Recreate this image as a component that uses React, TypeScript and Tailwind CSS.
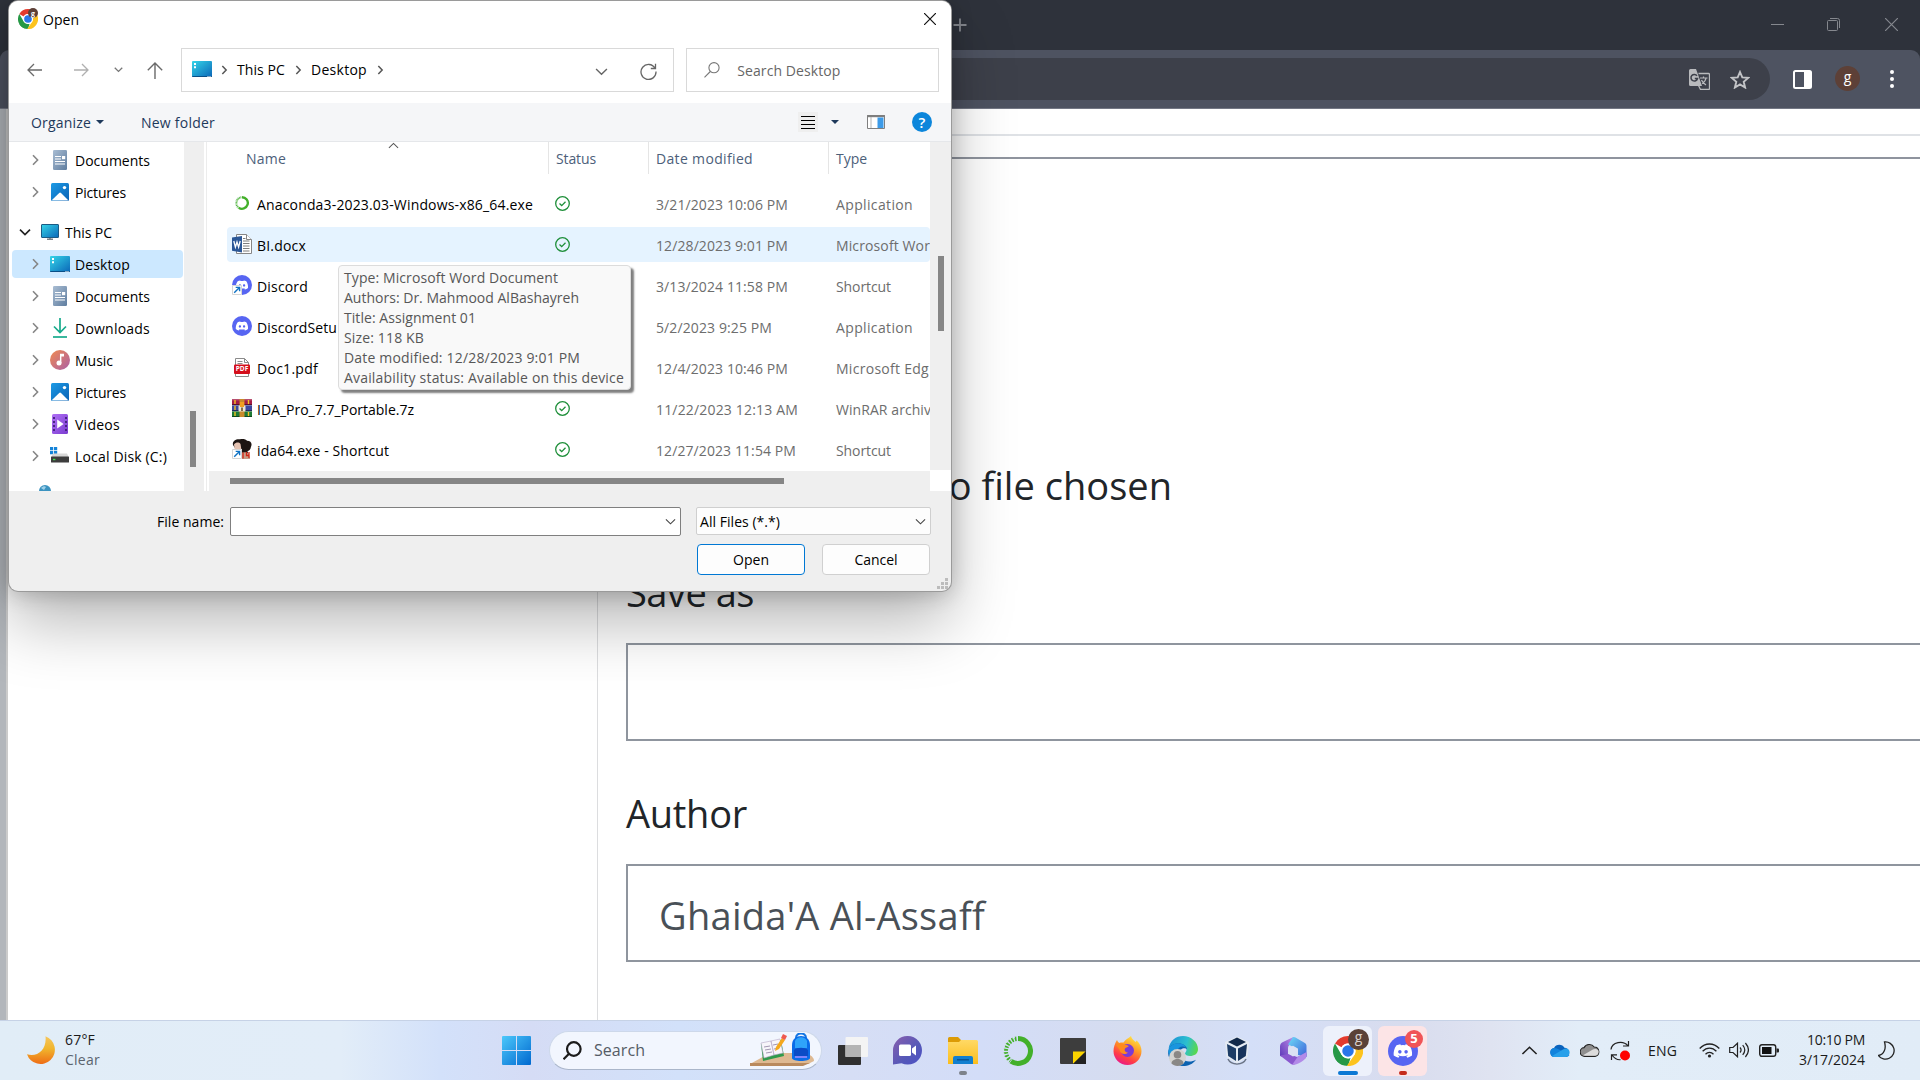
import React, { useLayoutEffect, useRef } from 'react';

/** Single line of text whose tracking is adjusted so that it spans `w` pixels. */
function Fit({ w, className = '', children }: { w: number; className?: string; children: string }) {
  const ref = useRef<HTMLSpanElement>(null);
  useLayoutEffect(() => {
    const el = ref.current;
    if (!el) return;
    el.style.letterSpacing = '0px';
    const natural = el.getBoundingClientRect().width;
    el.style.letterSpacing = `${(w - natural) / children.length}px`;
  }, [w, children]);
  return (
    <span ref={ref} className={`inline-block shrink-0 whitespace-pre ${className}`}>
      {children}
    </span>
  );
}

function Chrome({ size, className = '' }: { size: number; className?: string }) {
  return (
    <svg width={size} height={size} viewBox="0 0 48 48" className={className}>
      <circle cx="24" cy="24" r="24" fill="#fff" />
      <path d="M24 0A24 24 0 0 1 44.8 12H24A12 12 0 0 0 13.6 18L3.2 12A24 24 0 0 1 24 0Z" fill="#e33b2e" />
      <path d="M3.2 12 13.6 30A12 12 0 0 0 24 36L24 36 16 46.7A24 24 0 0 1 3.2 12Z" fill="#269846" />
      <path d="M13.6 30A12 12 0 0 0 28 35.3L24 48A24 24 0 0 1 3.5 36.5Z" fill="#269846" />
      <path d="M44.8 12A24 24 0 0 1 22 48L34.4 30A12 12 0 0 0 24 12Z" fill="#fcc31e" />
      <circle cx="24" cy="24" r="12" fill="#fff" />
      <circle cx="24" cy="24" r="9.2" fill="#2a76e8" />
    </svg>
  );
}

const DISCORD =
  'M20.3 4.4A19.8 19.8 0 0 0 15.4 2.9l-.6 1.3a18.3 18.3 0 0 0-5.5 0L8.6 2.9A19.7 19.7 0 0 0 3.7 4.4C.5 9-.3 13.6.1 18.1a19.9 19.9 0 0 0 6 3l1.3-2.1-2-.9.4-.3c3.9 1.8 8.2 1.8 12.1 0l.4.3-2 .9 1.3 2a19.8 19.8 0 0 0 6-3c.5-5.2-.8-9.7-3.3-13.6ZM8 15.3c-1.2 0-2.2-1.1-2.2-2.4s1-2.4 2.2-2.4 2.2 1.1 2.2 2.4-1 2.4-2.2 2.4Zm8 0c-1.2 0-2.2-1.1-2.2-2.4s1-2.4 2.2-2.4 2.2 1.1 2.2 2.4-1 2.4-2.2 2.4Z';

function Discord({ size }: { size: number }) {
  return (
    <svg width={size} height={size} viewBox="0 0 40 40">
      <circle cx="20" cy="20" r="20" fill="#5765f2" />
      <g transform="translate(7.5 8) scale(1.04 1)">
        <path d={DISCORD} fill="#fff" />
      </g>
    </svg>
  );
}

function Chevron({ dir, size = 12, color = '#808080', w = 1.4 }: { dir: 'r' | 'd' | 'u'; size?: number; color?: string; w?: number }) {
  const d = dir === 'r' ? 'M4 1.2 8.6 6 4 10.8' : dir === 'd' ? 'M1 3.7 6 8.5 11 3.7' : 'M1 8.5 6 3.7 11 8.5';
  return (
    <svg width={size} height={size} viewBox="0 0 12 12" fill="none" stroke={color} strokeWidth={w} className="shrink-0">
      <path d={d} />
    </svg>
  );
}

function DesktopIcon() {
  return (
    <svg width="20" height="16" viewBox="0 0 20 16">
      <defs>
        <linearGradient id="dk" x1="0" y1="0" x2="1" y2="1">
          <stop offset="0" stopColor="#35d5e8" />
          <stop offset="1" stopColor="#0b67b8" />
        </linearGradient>
      </defs>
      <rect width="20" height="16" rx="1" fill="url(#dk)" />
      <path d="M0 15h20v0a1 1 0 0 1-1 1H1a1 1 0 0 1-1-1Z" fill="#0a4f86" />
      <path d="M2 2h2v2H2zM2 5.2h2v2H2zM15.5 15h1v1h-1zM17.5 15h1v1h-1z" fill="#fff" />
    </svg>
  );
}

function DocumentIcon() {
  return (
    <svg width="14" height="20" viewBox="0 0 14 20">
      <defs>
        <linearGradient id="dc" x1="0" y1="0" x2="1" y2="1">
          <stop offset="0" stopColor="#a9bdd3" />
          <stop offset="1" stopColor="#5f7d9f" />
        </linearGradient>
      </defs>
      <rect width="14" height="20" rx="1.3" fill="url(#dc)" />
      <path d="M2 6.5h6M2 9h6M2 11.5h10M2 14h10" stroke="#fff" strokeWidth="1.2" />
      <rect x="9" y="6" width="3.2" height="3.2" fill="#fff" />
    </svg>
  );
}

function PicturesIcon() {
  return (
    <svg width="18" height="18" viewBox="0 0 18 18">
      <defs>
        <linearGradient id="pc" x1="0" y1="0" x2="1" y2="1">
          <stop offset="0" stopColor="#1d9be6" />
          <stop offset="1" stopColor="#0b62b4" />
        </linearGradient>
      </defs>
      <rect width="18" height="18" rx="1.5" fill="url(#pc)" />
      <path d="M1 17 8.2 9.9a1.3 1.3 0 0 1 1.8 0L17 17a1 1 0 0 1-.7.6H1.7A1 1 0 0 1 1 17Z" fill="#fff" />
      <circle cx="13.5" cy="4.6" r="1.7" fill="#fff" />
    </svg>
  );
}

function PcIcon() {
  return (
    <svg width="18" height="16" viewBox="0 0 18 16">
      <path d="M6 15.3h6M9 13v2" stroke="#7b8288" strokeWidth="1.6" />
      <rect x=".5" y=".5" width="17" height="13" rx=".5" fill="url(#dk)" stroke="#1b5b84" />
    </svg>
  );
}

function DownloadsIcon() {
  return (
    <svg width="16" height="20" viewBox="0 0 16 20" fill="none" stroke="#17ab8c" strokeWidth="1.7">
      <path d="M8 0v14M2 8.5l6 6 6-6" />
      <path d="M1 19h14" />
    </svg>
  );
}

function MusicIcon() {
  return (
    <svg width="20" height="20" viewBox="0 0 20 20">
      <defs>
        <linearGradient id="mu" x1="0" y1="0" x2="1" y2="1">
          <stop offset="0" stopColor="#f08a50" />
          <stop offset="1" stopColor="#ab5fa6" />
        </linearGradient>
      </defs>
      <circle cx="10" cy="10" r="10" fill="url(#mu)" />
      <path d="M10 3.8h4v2.6h-2.6v6.8h-1.5Z" fill="#fff" />
      <circle cx="9" cy="13" r="2.5" fill="#fff" />
    </svg>
  );
}

function VideosIcon() {
  return (
    <svg width="16" height="20" viewBox="0 0 16 20">
      <defs>
        <linearGradient id="vi" x1="0" y1="0" x2="1" y2="1">
          <stop offset="0" stopColor="#b070f5" />
          <stop offset="1" stopColor="#7a3bd0" />
        </linearGradient>
      </defs>
      <rect width="16" height="20" rx="1.5" fill="url(#vi)" />
      <path d="M2 3v15M14 3v15" stroke="#40207a" strokeWidth="1.8" strokeDasharray="2 2" />
      <path d="M5.2 5.5 11.6 10l-6.4 4.5Z" fill="#fff" />
    </svg>
  );
}

function DiskIcon() {
  return (
    <svg width="20" height="18" viewBox="0 0 20 18">
      <path d="M0 0h3.2v3.2H0zM4 0h3.2v3.2H4zM0 4h3.2v3.2H0zM4 4h3.2v3.2H4z" fill="#1583d8" />
      <path d="M3 6.5h14l2 4H1Z" fill="#d8d8d8" />
      <rect x="1" y="9.5" width="18" height="6" rx=".6" fill="#3d3d3d" />
      <path d="M3 12.5h2.4" stroke="#3fe04d" strokeWidth="1.4" />
    </svg>
  );
}

type Node = { label: string; w: number; icon: React.ReactNode; selected?: boolean };
const quick: Node[] = [
  { label: 'Documents', w: 75, icon: <DocumentIcon /> },
  { label: 'Pictures', w: 51, icon: <PicturesIcon /> },
];
const pc: Node[] = [
  { label: 'Desktop', w: 55, icon: <DesktopIcon />, selected: true },
  { label: 'Documents', w: 75, icon: <DocumentIcon /> },
  { label: 'Downloads', w: 75, icon: <DownloadsIcon /> },
  { label: 'Music', w: 38, icon: <MusicIcon /> },
  { label: 'Pictures', w: 51, icon: <PicturesIcon /> },
  { label: 'Videos', w: 45, icon: <VideosIcon /> },
  { label: 'Local Disk (C:)', w: 92, icon: <DiskIcon /> },
];

function TreeRow({ n }: { n: Node }) {
  return (
    <div className="flex h-8 items-center pl-[3px]">
      <div className={`flex h-7 w-[171px] items-center rounded-sm pl-[17px] ${n.selected ? 'bg-[#cce8ff]' : ''}`}>
        <Chevron dir="r" color="#868686" w={1.6} />
        <div className="ml-1 flex w-[30px] justify-center">{n.icon}</div>
        <Fit w={n.w}>{n.label}</Fit>
      </div>
    </div>
  );
}

function Ring({ size }: { size: number }) {
  return (
    <svg width={size} height={size} viewBox="0 0 30 30" fill="none" stroke="#43b02a">
      <path d="M15 2.6A12.4 12.4 0 1 1 8 25.2" strokeWidth="5" />
      <path d="M13.5 2.8A12.4 12.4 0 0 0 7.5 24.8" strokeWidth="4.4" strokeDasharray="1.8 1.3" />
      <path d="M12 1.2A14 14 0 0 0 6 26" strokeWidth="1" strokeDasharray="3 1.2" stroke="#dbe3f5" />
    </svg>
  );
}

function WordIcon() {
  return (
    <svg width="20" height="20" viewBox="0 0 20 20">
      <path d="M4.5.5h10l5 5v14h-15Z" fill="#fff" stroke="#868686" />
      <path d="M14.5.5v5h5" fill="#fff" stroke="#868686" />
      <path d="M11 4.5h2.5M11 7h6.5M11 9.5h6.5M11 12h6.5M11 14.5h6.5M11 17h6.5" stroke="#7d7d7d" />
      <path d="M0 3.4 10 2v16.4L0 16.8Z" fill="#2b5797" />
      <path d="m1.8 7 1.6 6.2L5 8l1.6 5.2L8.2 7" fill="none" stroke="#fff" strokeWidth="1.3" />
    </svg>
  );
}

function ShortcutBadge() {
  return (
    <svg width="10" height="10" viewBox="0 0 10 10" className="absolute bottom-0 left-0 bg-white">
      <path d="M.5.5h9v9h-9z" fill="#fff" stroke="#d5d5d5" />
      <path d="M2.2 7.8 7.2 2.8M3.7 2.4h3.9v3.9" fill="none" stroke="#0f72c4" strokeWidth="1.4" />
    </svg>
  );
}

function PdfIcon() {
  return (
    <div className="flex h-5 w-5 translate-y-px justify-center">
      <div className="relative">
        <svg width="16" height="19" viewBox="0 0 16 19">
          <path d="M1.5.5h9l4 4v14h-13Z" fill="#fff" stroke="#8b8b8b" />
          <path d="M10.5.5v4h4M3.5 3.5h5M3.5 5.5h5" fill="none" stroke="#8b8b8b" />
          <rect y="6.5" width="16" height="9.5" rx="1" fill="#d40f1c" />
        </svg>
        <span className="absolute left-0 top-[6.5px] w-4 text-center text-[6.5px] font-bold leading-[9.5px] text-white">PDF</span>
      </div>
    </div>
  );
}

function RarIcon() {
  return (
    <svg width="20" height="18" viewBox="0 0 20 18">
      <rect width="20" height="6" fill="#a31c46" />
      <rect y="6" width="20" height="6" fill="#3b489f" />
      <rect y="12" width="20" height="6" fill="#1d7a35" />
      <path d="M0 .8h20M0 6.5h20M0 12.5h20" stroke="#ffffff55" />
      <path d="M0 5.6h20M0 11.6h20M0 17.6h20" stroke="#00000077" />
      <path d="M3 1v4M3 7v4M3 13v4M16.5 1v4M16.5 13v4" stroke="#f5c223" strokeWidth="1.4" />
      <rect x="7.5" width="5" height="18" fill="#c98a2b" />
      <rect x="6.5" y="6.5" width="7" height="6" rx="1" fill="#e9e4d6" />
      <rect x="8" y="3" width="4" height="5" fill="#f0a020" />
      <path d="M10 8.5v3.5" stroke="#6b5020" strokeWidth="1.6" />
    </svg>
  );
}

function IdaIcon() {
  return (
    <svg width="20" height="20" viewBox="0 0 20 20">
      <path d="M1 6C0 2 4-.4 8 .3c3-.6 6 0 7 1.4 4 0 5.500 3 4 6-.5 3-2 4-3.500 4.300l2 8H7L3 9Z" fill="#1d1512" />
      <path d="M2 5.500C4 3 7 3 8.500 5l.8 5c0 3-1.200 5-3.300 5S2.500 11 2.500 9Z" fill="#e6c3b2" />
      <path d="M9 14c3-1 6-1 8 1l1 5H8Z" fill="#c79c86" />
      <path d="M11 13.500v6M14.500 13v3.500h3M17 13v6" stroke="#cf2414" strokeWidth="1.300" fill="none" />
    </svg>
  );
}

type File = { icon: React.ReactNode; name: string; w: number; date: string; dw: number; type: string; tw: number; hover?: boolean; covered?: boolean };
const files: File[] = [
  { icon: <Ring size={14} />, name: 'Anaconda3-2023.03-Windows-x86_64.exe', w: 276, date: '3/21/2023 10:06 PM', dw: 132, type: 'Application', tw: 77 },
  { icon: <WordIcon />, name: 'BI.docx', w: 49, date: '12/28/2023 9:01 PM', dw: 132, type: 'Microsoft Wor', tw: 94, hover: true },
  { icon: <div className="relative h-5"><Discord size={20} /><ShortcutBadge /></div>, name: 'Discord', w: 51, date: '3/13/2024 11:58 PM', dw: 132, type: 'Shortcut', tw: 55, covered: true },
  { icon: <Discord size={20} />, name: 'DiscordSetu', w: 80, date: '5/2/2023 9:25 PM', dw: 116, type: 'Application', tw: 77, covered: true },
  { icon: <PdfIcon />, name: 'Doc1.pdf', w: 61, date: '12/4/2023 10:46 PM', dw: 132, type: 'Microsoft Edg', tw: 93, covered: true },
  { icon: <RarIcon />, name: 'IDA_Pro_7.7_Portable.7z', w: 157, date: '11/22/2023 12:13 AM', dw: 142, type: 'WinRAR archiv', tw: 95 },
  { icon: <div className="relative h-5"><IdaIcon /><ShortcutBadge /></div>, name: 'ida64.exe - Shortcut', w: 132, date: '12/27/2023 11:54 PM', dw: 140, type: 'Shortcut', tw: 55 },
];

function FileRow({ f }: { f: File }) {
  return (
    <div className={`mb-[6px] ml-[18px] flex h-[35px] w-[703px] shrink-0 items-center overflow-hidden rounded-sm text-[#6d6d6d] ${f.hover ? 'bg-[#e5f3ff]' : ''}`}>
      <div className="ml-[5px] flex w-5 shrink-0 -translate-y-px justify-center">{f.icon}</div>
      <div className="ml-[5px] w-[298px] shrink-0 translate-y-px text-black"><Fit w={f.w}>{f.name}</Fit></div>
      <svg width="15" height="15" viewBox="0 0 15 15" fill="none" stroke="#1f8f3a" strokeWidth="1.3" className={`shrink-0 ${f.covered ? 'invisible' : ''}`}>
        <circle cx="7.500" cy="7.500" r="6.800" />
        <path d="m4.500 7.600 2.200 2 3.800-3.800" />
      </svg>
      <div className="ml-[86px] w-[180px] shrink-0 translate-y-px"><Fit w={f.dw}>{f.date}</Fit></div>
      <div className="translate-y-px"><Fit w={f.tw}>{f.type}</Fit></div>
    </div>
  );
}

const tip: [string, number][] = [
  ['Type: Microsoft Word Document', 214],
  ['Authors: Dr. Mahmood AlBashayreh', 235],
  ['Title: Assignment 01', 132],
  ['Size: 118 KB', 80],
  ['Date modified: 12/28/2023 9:01 PM', 236],
  ['Availability status: Available on this device', 280],
];

function OpenDialog() {
  return (
    <div className="absolute left-[9px] top-px flex h-[590px] w-[942px] flex-col rounded-[9px] bg-[#efefef] text-[14px] text-black shadow-[0_0_0_1px_#9a9a9a,0_32px_64px_rgba(0,0,0,0.28),0_2px_21px_rgba(0,0,0,0.22)]">
      <div className="flex h-[36px] shrink-0 items-center rounded-t-[9px] bg-white pl-[9px] pr-[15px]">
        <div className="relative">
          <Chrome size={20} />
          <span className="absolute -top-px left-[10px] flex h-[10px] w-[10px] items-center justify-center rounded-full bg-[#5d4037] text-[7px] font-bold leading-none text-white">g</span>
        </div>
        <Fit w={36} className="ml-[5px]">Open</Fit>
        <svg width="12" height="12" viewBox="0 0 12 12" stroke="#111" strokeWidth="1.200" className="ml-auto"><path d="m0 0 12 12M12 0 0 12" /></svg>
      </div>
      <div className="flex h-[66px] shrink-0 items-center bg-white pr-3">
        <svg width="15" height="14" viewBox="0 0 15 14" fill="none" stroke="#6a6a6a" strokeWidth="1.300" className="ml-[18px]"><path d="M15 7H1M7 1 1 7l6 6" /></svg>
        <svg width="15" height="14" viewBox="0 0 15 14" fill="none" stroke="#b0b0b0" strokeWidth="1.300" className="ml-[32px]"><path d="M0 7h14M8 1l6 6-6 6" /></svg>
        <div className="-mt-0.5 ml-[25px]"><Chevron dir="d" size={9} color="#777" w={1.800} /></div>
        <svg width="16" height="17" viewBox="0 0 16 17" fill="none" stroke="#6a6a6a" strokeWidth="1.400" className="ml-[24px]"><path d="M8 17V1M.8 8.200 8 1l7.200 7.200" /></svg>
        <div className="ml-[18px] flex h-[44px] w-[494px] items-center border border-[#d9d9d9] pl-[10px]">
          <div className="-mt-0.5"><DesktopIcon /></div>
          <div className="ml-[7px]"><Chevron dir="r" size={10} color="#555" w={1.800} /></div>
          <Fit w={48} className="ml-2 -translate-y-px">This PC</Fit>
          <div className="ml-2"><Chevron dir="r" size={10} color="#555" w={1.800} /></div>
          <Fit w={56} className="ml-2 -translate-y-px">Desktop</Fit>
          <div className="ml-2"><Chevron dir="r" size={10} color="#555" w={1.800} /></div>
          <div className="ml-auto mr-[32px] mt-0.5"><Chevron dir="d" size={13} color="#666" w={1.300} /></div>
          <svg width="17" height="17" viewBox="0 0 17 17" fill="none" stroke="#666" strokeWidth="1.300" className="mr-4 mt-0.5"><path d="M15 5.200A7.500 7.500 0 1 0 16 8.500M15.500.8v4.700h-4.700" /></svg>
        </div>
        <div className="ml-3 flex h-[44px] w-[253px] items-center border border-[#d9d9d9] pl-[17px] text-[#666]">
          <svg width="16" height="16" viewBox="0 0 16 16" fill="none" stroke="#777" strokeWidth="1.100"><circle cx="10" cy="5.700" r="5.100" /><path d="M6.300 9.500.5 15.300" /></svg>
          <Fit w={103} className="ml-[17px]">Search Desktop</Fit>
        </div>
      </div>
      <div className="flex h-[39px] shrink-0 items-center border-b border-[#e5e7ea] bg-[#f5f6f8] pl-[22px] pr-[19px] text-[#1e395b]">
        <Fit w={60}>Organize</Fit>
        <svg width="8" height="4" viewBox="0 0 8 4" className="ml-[5px]"><path d="M0 0h8L4 4Z" fill="#1e395b" /></svg>
        <Fit w={74} className="ml-[37px]">New folder</Fit>
        <div className="ml-auto flex h-5 w-5 flex-col items-center justify-center gap-[3px] bg-[#efefef]">
          <i className="h-px w-[14px] bg-black" /><i className="h-px w-[14px] bg-black" /><i className="h-px w-[14px] bg-black" /><i className="h-px w-[14px] bg-black" />
        </div>
        <svg width="8" height="4" viewBox="0 0 8 4" className="ml-[13px]"><path d="M0 0h8L4 4Z" fill="#1e395b" /></svg>
        <svg width="18" height="14" viewBox="0 0 18 14" className="ml-[28px]">
          <path d="M.5.5h17v13H.5Z" fill="#fff" stroke="#7f7f7f" />
          <path d="M0 1.200h18" stroke="#7f7f7f" strokeWidth="2" /><path d="M4 2v11" stroke="#b5b5b5" />
          <path d="M10.500 2.500h6v10.500h-6z" fill="#3d9be8" />
        </svg>
        <span className="ml-[27px] flex h-5 w-5 items-center justify-center rounded-full bg-[#0c86db] text-[15px] font-semibold leading-none text-white">?</span>
      </div>
      <div className="relative flex h-[349px] shrink-0">
        <div className="h-full w-[175px] shrink-0 overflow-hidden bg-white pt-[2px]">
          {quick.map((n) => <TreeRow key={n.label} n={n} />)}
          <div className="mt-2 flex h-8 items-center pl-[10px]">
            <Chevron dir="d" size={12} color="#222" w={1.700} />
            <div className="ml-[10px]"><PcIcon /></div>
            <Fit w={47} className="ml-[6px]">This PC</Fit>
          </div>
          {pc.map((n) => <TreeRow key={n.label} n={n} />)}
          <svg width="12" height="12" viewBox="0 0 12 12" className="ml-[30px] mt-[13px]"><circle cx="6" cy="6" r="6" fill="#3b93c0" /><path d="M2 3c2-2 4-2 5-1L5 5Z" fill="#9fd0e8" /></svg>
        </div>
        <div className="flex w-5 shrink-0 justify-center bg-[#efefef] pr-0.5 pt-[269px]"><div className="h-[56px] w-[6px] bg-[#868686]" /></div>
        <div className="w-[3px] shrink-0 border-r border-[#ececec] bg-white" />
        <div className="w-0.5 shrink-0 bg-white" />
        <div className="flex w-[721px] shrink-0 flex-col bg-white">
          <div className="flex h-8 shrink-0 items-center text-[#4c607a]">
            <div className="flex h-full w-[340px] items-center border-r border-[#e5e5e5] pl-[37px]">
              <Fit w={40}>Name</Fit>
              <div className="-mt-[26px] ml-[102px]"><Chevron dir="u" size={11} color="#555" w={1.100} /></div>
            </div>
            <div className="flex h-full w-[100px] items-center border-r border-[#e5e5e5] pl-[7px]"><Fit w={40}>Status</Fit></div>
            <div className="flex h-full w-[180px] items-center border-r border-[#e5e5e5] pl-[7px]"><Fit w={97}>Date modified</Fit></div>
            <Fit w={31} className="ml-[7px]">Type</Fit>
          </div>
          <div className="flex h-[297px] shrink-0 flex-col overflow-hidden pt-3">
            {files.map((f) => <FileRow key={f.name} f={f} />)}
          </div>
          <div className="h-5 bg-[#efefef] pl-[21px] pt-[7px]"><div className="h-[6px] w-[554px] bg-[#868686]" /></div>
        </div>
        <div className="flex-1 bg-white">
          <div className="flex h-[328px] justify-center bg-[#efefef] pt-[114px]"><div className="h-[75px] w-[6px] bg-[#868686]" /></div>
        </div>
        <div className="absolute left-[329px] top-[123px] flex h-[125px] w-[293px] flex-col rounded-[4px] border border-[#dcdcdc] bg-[#f9f9f9] pl-[5px] pt-px text-[#575757] shadow-[3px_3px_2px_rgba(0,0,0,0.5)]">
          {tip.map(([t, w]) => <Fit key={t} w={w} className="h-5 self-start leading-[22px]">{t}</Fit>)}
        </div>
      </div>
      <div className="relative flex flex-1 flex-col">
        <div className="mt-4 flex h-[29px] items-center">
          <Fit w={67} className="ml-[148px]">File name:</Fit>
          <div className="ml-[6px] flex h-[29px] w-[451px] items-center justify-end rounded-[2px] border border-[#7f7f7f] bg-white pr-[4px]"><Chevron dir="d" size={11} color="#444" w={1.200} /></div>
          <div className="-mt-px ml-[15px] flex h-7 w-[235px] items-center justify-between rounded-[2px] border border-[#cfcfcf] bg-[#fdfdfd] pl-[3px] pr-[4px]"><Fit w={80}>All Files (*.*)</Fit><Chevron dir="d" size={11} color="#444" w={1.200} /></div>
        </div>
        <div className="ml-[688px] mt-2 flex gap-[17px]">
          <div className="flex h-[31px] w-[108px] items-center justify-center rounded-[4px] border border-[#0078d4] bg-[#fdfdfd]"><Fit w={36}>Open</Fit></div>
          <div className="flex h-[31px] w-[108px] items-center justify-center rounded-[4px] border border-[#d0d0d0] bg-[#fdfdfd]"><Fit w={43}>Cancel</Fit></div>
        </div>
        <svg width="11" height="11" viewBox="0 0 11 11" className="absolute bottom-[2px] right-[3px]"><path d="M8 0h3v3H8zM4 4h3v3H4zM8 4h3v3H8zM0 8h3v3H0zM4 8h3v3H4zM8 8h3v3H8z" fill="#bcbcbc" /></svg>
      </div>
    </div>
  );
}

function BrowserChrome() {
  return (
    <div className="h-[109px] shrink-0 bg-[#2e323b]">
      <div className="flex h-[50px] items-center">
        <svg width="14" height="14" viewBox="0 0 14 14" stroke="#85888e" strokeWidth="1.800" className="ml-[953px]"><path d="M7 .5v13M.5 7h13" /></svg>
        <svg width="13" height="13" viewBox="0 0 13 13" stroke="#85888e" className="-mt-px ml-auto"><path d="M0 6.500h13" /></svg>
        <svg width="13" height="13" viewBox="0 0 13 13" fill="none" stroke="#85888e" className="-mt-px ml-[43px]"><rect x=".5" y="2.500" width="10" height="10" rx="1" /><path d="M3 .5h7.500a2 2 0 0 1 2 2V10" /></svg>
        <svg width="13" height="13" viewBox="0 0 13 13" stroke="#85888e" strokeWidth="1.200" className="-mt-px ml-[45px] mr-[22px]"><path d="m0 0 13 13M13 0 0 13" /></svg>
      </div>
      <div className="flex h-[59px] items-center rounded-t-[9px] border-b border-[#737784] bg-[#4e5361]">
        <div className="flex h-[42px] w-[1700px] items-center justify-end rounded-full bg-[#3d404a] pr-5 ml-[70px]">
          <svg width="21" height="21" viewBox="0 0 21 21" className="mr-5">
            <path d="M9.500 4.500h10a1 1 0 0 1 1 1v14a1 1 0 0 1-1 1h-8l-2-4" fill="none" stroke="#b9babd" strokeWidth="1.300" />
            <path d="M1.500 0H7l1.300 3.500L13 17H1.500A1.500 1.500 0 0 1 0 15.500v-14A1.500 1.500 0 0 1 1.500 0Z" fill="#b9babd" />
            <path d="M8 6.800A3.300 3.300 0 1 0 8.500 9.500H5.800" fill="none" stroke="#3d404a" strokeWidth="1.500" />
            <path d="M11 9h7.500M14.500 7.500V9M17 9c-.5 3-3 5-4 5.500M12.500 11c1 2.500 3 4 4.500 5" fill="none" stroke="#b9babd" strokeWidth="1.200" />
          </svg>
          <svg width="20" height="19" viewBox="0 0 20 19"><path d="m10 2 2.300 5.400 5.900.5-4.500 3.900 1.400 5.700L10 14.400l-5.100 3.100 1.400-5.700L1.800 7.900l5.900-.5Z" fill="none" stroke="#c3c4c7" strokeWidth="1.900" /></svg>
        </div>
        <svg width="19" height="19" viewBox="0 0 19 19" className="ml-[23px]"><rect x="1" y="1" width="17" height="17" rx="1.500" fill="none" stroke="#fff" strokeWidth="2" /><path d="M11 1h7v17h-7z" fill="#fff" /></svg>
        <span className="-mt-px ml-[23px] flex h-[25px] w-[25px] items-center justify-center rounded-full bg-[#5d4037] pb-[3px] text-[14px] leading-none text-white">g</span>
        <svg width="4" height="18" viewBox="0 0 4 18" fill="#fff" className="ml-[30px]"><circle cx="2" cy="2" r="2" /><circle cx="2" cy="9" r="2" /><circle cx="2" cy="16" r="2" /></svg>
      </div>
    </div>
  );
}

function Page() {
  return (
    <div className="flex flex-1 overflow-hidden bg-white">
      <div className="w-[6px] bg-[#b2b6bb]" />
      <div className="w-[2px] bg-[#cbcbcb]" />
      <div className="flex flex-1 flex-col">
        <div className="mt-[25px] h-[2px] shrink-0 bg-[#dfe2e6]" />
        <div className="mt-[21px] h-[2px] shrink-0 bg-[#8f949e]" />
        <div className="flex flex-1">
          <div className="w-[590px] shrink-0 border-r-[1.500px] border-[#dcdddf]" />
          <div className="flex flex-1 flex-col pl-[28px] text-[38px] leading-[50px] text-[#212529]">
            <div className="mt-[301px] flex h-[50px] pl-[294px]">
              <Fit w={252}>No file chosen</Fit>
            </div>
            <Fit w={128} className="mt-[57px] self-start">Save as</Fit>
            <div className="mt-[26px] h-[98px] shrink-0 border-2 border-r-0 border-[#8f959e]" />
            <Fit w={121} className="mt-[47px] self-start">Author</Fit>
            <div className="mt-[26px] flex h-[98px] shrink-0 items-center border-2 border-r-0 border-[#8f959e] pl-[31px] text-[#495057]">
              <Fit w={326} className="translate-y-[2px]">Ghaida'A Al-Assaff</Fit>
            </div>
          </div>
        </div>
      </div>
    </div>
  );
}

function Cell({ children, tile = '', bar = '' }: { children: React.ReactNode; tile?: string; bar?: string }) {
  return (
    <div className="flex w-[55px] shrink-0 justify-center">
      <div className={`relative flex h-[50px] w-[49px] items-center justify-center rounded-md ${tile}`}>
        {children}
        {bar && <i className={`absolute bottom-px h-1 rounded-full ${bar}`} />}
      </div>
    </div>
  );
}

function Taskbar() {
  return (
    <div className="flex h-[60px] shrink-0 items-center border-t border-[#c6d2e6] bg-[linear-gradient(90deg,#e1edf7_0px,#e2edf8_340px,#d3e1fa_440px,#d5dcf5_530px,#d2e1fa_680px,#d6def5_850px,#d3ddf8_980px,#d6dcee_1150px,#d4dff8_1250px,#d8dcee_1400px,#dfe3f1_1490px,#e2edf8_1580px,#e1ecf7_1920px)] text-[14px] text-[#1a1a1a]">
      <svg width="29" height="29" viewBox="0 0 29 29" className="-mt-px ml-[27px]">
        <defs><linearGradient id="mn" x1="0" y1="0" x2="0" y2="1"><stop offset="0" stopColor="#f6c65c" /><stop offset=".45" stopColor="#f0b52d" /><stop offset="1" stopColor="#ee6c15" /></linearGradient></defs>
        <path d="M18.500.3A14.300 14.300 0 1 1 0 18.200C10 21.500 20 14 18.500.3Z" fill="url(#mn)" />
      </svg>
      <div className="-mt-0.5 ml-[9px] flex w-[428px] shrink-0 flex-col leading-5">
        <Fit w={30} className="self-start">67°F</Fit>
        <Fit w={35} className="self-start text-[#5b646e]">Clear</Fit>
      </div>
      <svg width="29" height="29" viewBox="0 0 29 29" className="ml-[9px] shrink-0">
        <defs><linearGradient id="wn" x1="0" y1="0" x2="1" y2="1"><stop offset="0" stopColor="#4cc8fb" /><stop offset="1" stopColor="#0068cf" /></linearGradient></defs>
        <path d="M1 0h13v14H0V1a1 1 0 0 1 1-1ZM15 0h13a1 1 0 0 1 1 1v13H15ZM0 15h14v14H1a1 1 0 0 1-1-1ZM15 15h14v13a1 1 0 0 1-1 1H15Z" fill="url(#wn)" />
      </svg>
      <div className="-mt-px ml-[18px] flex h-[39px] w-[273px] shrink-0 items-center overflow-hidden rounded-full border border-b-[#aab6ca] border-[#cdd8ea] bg-[#f2f6fe] pl-[13px] pr-[5px]">
        <svg width="19" height="19" viewBox="0 0 19 19" fill="none" stroke="#1c1c1c" strokeWidth="2.200"><circle cx="10.800" cy="8" r="6.800" /><path d="m6 12.800-5.500 5.500" /></svg>
        <Fit w={51} className="ml-3 text-[16px] text-[#555c66]">Search</Fit>
        <svg width="66" height="34" viewBox="0 0 66 34" className="ml-auto">
          <path d="M0 31 20 20h36q8 3 8 8l-6 3Z" fill="#deb992" /><path d="M0 30h60l-7 3H0Z" fill="#b98a5e" />
          <path d="m11 11 20-4 3 16-21 5Z" fill="#2f9a4b" /><path d="m11 10 10-2 3 14-10 3ZM21 8l9-2 3 14-9 2Z" fill="#f7f5fa" stroke="#b5a8c6" strokeWidth=".6" />
          <path d="m14 14 6-1m-5 4 6-1m-5 4 6-1m1-7 5-1m-4 5 5-1" stroke="#8d7fa0" strokeWidth=".8" />
          <path d="m26 14 6-9 3 2-6 9-4 2Z" fill="#f5a81c" /><path d="m31 5 2-4 4 2-2 4Z" fill="#ee5a50" />
          <path d="M46 5c0-6 10-6 10 0" fill="none" stroke="#1476e2" strokeWidth="2" />
          <path d="M42 12c0-12 18-12 18 0v13c0 4-18 4-18 0Z" fill="#0a6ce8" /><path d="M45 8c2-5 10-5 12 0v7H45Z" fill="#2fa4fa" />
          <path d="M44 17c3-3 11-3 14 0v6H44Z" fill="#0a4bc6" /><path d="M45 24h12" stroke="#a58bff" strokeWidth="1.500" />
        </svg>
      </div>
      <div className="ml-[3px] flex shrink-0">
        <Cell><svg width="30" height="28" viewBox="0 0 30 28"><rect y="8" width="23" height="20" rx="1" fill="#303030" /><rect x="7.500" width="22.500" height="20" rx="1" fill="#f4f4f4" /><path d="M7.500 8H23v12H7.500Z" fill="#b4b4b4" /></svg></Cell>
        <Cell>
          <svg width="29" height="29" viewBox="0 0 29 29">
            <defs><linearGradient id="ct" x1="0" y1="0" x2="1" y2="1"><stop offset="0" stopColor="#8a5fae" /><stop offset=".6" stopColor="#5558b8" /><stop offset="1" stopColor="#4c50c6" /></linearGradient></defs>
            <path d="M14.500 0a14.300 14.300 0 1 1-6 27.200L0 28.500V14.300A14.400 14.400 0 0 1 14.500 0Z" fill="url(#ct)" />
            <rect x="6" y="8.500" width="12" height="11.500" rx="1.500" fill="#fff" /><path d="m19 12.500 4-3v10l-4-3Z" fill="#fff" />
          </svg>
        </Cell>
        <Cell bar="w-2 bg-[#7d828b]">
          <svg width="30" height="27" viewBox="0 0 30 27">
            <defs><linearGradient id="fo" x1="0" y1="0" x2="0" y2="1"><stop offset="0" stopColor="#ffd965" /><stop offset="1" stopColor="#fbbd1c" /></linearGradient></defs>
            <path d="M0 1.500A1.500 1.500 0 0 1 1.500 0H10l3 3v4H0Z" fill="#dc9b06" /><path d="M0 5h11l2-2h15.500A1.500 1.500 0 0 1 30 4.500V27H0Z" fill="url(#fo)" />
            <path d="M5 27v-6a2 2 0 0 1 2-2h16a2 2 0 0 1 2 2v6Z" fill="#127fd0" /><path d="M9 22.800h12" stroke="#0a4f8c" strokeWidth="1.300" />
          </svg>
        </Cell>
        <Cell><Ring size={30} /></Cell>
        <Cell><svg width="26" height="26" viewBox="0 0 26 26"><path d="M1 0h24a1 1 0 0 1 1 1v24a1 1 0 0 1-1 1H1a1 1 0 0 1-1-1V1a1 1 0 0 1 1-1Z" fill="#3d3d3d" /><path d="M13 13.500h12.500L13 26Z" fill="#fbd400" /><path d="M26 13.500V26H13Z" fill="#222" /></svg></Cell>
        <Cell>
          <svg width="29" height="29" viewBox="0 0 29 29">
            <defs><linearGradient id="ff" x1=".8" y1="0" x2=".3" y2="1"><stop offset="0" stopColor="#fff04a" /><stop offset=".4" stopColor="#ff9a26" /><stop offset=".75" stopColor="#ff3c46" /><stop offset="1" stopColor="#e8188c" /></linearGradient></defs>
            <path d="M4 4c.5 1.500 1.500 2.500 2.500 3 1-.5 2.500-.6 4-.4C12.500 3.500 15 2.500 18 0c.5 3 3 4 4.500 6 .5-.5 1-.8 1.200-1.500 3 2.500 4.800 6.500 4.800 10.500a14 14 0 0 1-28 0C.5 11 2 7 4 4Z" fill="url(#ff)" />
            <circle cx="14.500" cy="14.500" r="6.500" fill="#7a3ad6" /><path d="M3 9c3-2 7-2 9 0 2 0 4 .5 3.500 1.500-1 1-3 1-3.500 2-1 2 .5 4 3 4-3 3-8 1.500-8.500-3Z" fill="#ff8a1e" />
          </svg>
        </Cell>
        <Cell>
          <svg width="30" height="30" viewBox="0 0 30 30">
            <defs><linearGradient id="eg" x1="0" y1=".3" x2="1" y2=".5"><stop offset="0" stopColor="#1b8fd6" /><stop offset=".6" stopColor="#2bbfcf" /><stop offset="1" stopColor="#58d84d" /></linearGradient></defs>
            <path d="M.5 13C2 4 8 0 15 0c8 0 15 6 15 13 0 5-4 7-8 7-3 0-5-1-5-2.500 0-1 1.500-1.500 1.500-4 0-3-3.500-5-7-5S2 10 .5 13Z" fill="url(#eg)" />
            <path d="M.2 16C1 9 6 7.500 11 7.500c4 0 8 2.500 8 6-1-1.500-4-2-6 0-3 4 1 12 8 12 3 0 5-.7 7-1.800C25 28 20 30 15 30 6 30-.5 23 .2 16Z" fill="#0c62b0" />
            <path d="M.2 16C1 9 6 7.500 11 7.500c3 0 6 1.500 7 4-3-2-8-1-9 4L2 20Z" fill="#1a95de" />
            <circle cx="9.500" cy="21.500" r="8.500" fill="#d3d3d1" /><circle cx="9.500" cy="18.800" r="3.800" fill="#8a8886" /><path d="M3.500 27.500c0-6 12-6 12 0-3 3.200-9 3.200-12 0Z" fill="#8a8886" />
          </svg>
        </Cell>
        <Cell>
          <svg width="26" height="29" viewBox="0 0 26 29" className="-ml-0.5">
            <path d="M4 23c3 6.500 15 6.500 18 0" fill="none" stroke="#6a7486" strokeWidth="1.500" />
            <path d="M13 .5 25 6l-1.500 15L13 27.500 2.500 21 1 6Z" fill="#e4eaf2" />
            <path d="M13 1.500 22 6 13 10.500 4 6Z" fill="#12294a" /><path d="m3 8 9 4.500v12.500l-7.800-5Z" fill="#1c3c66" /><path d="m23 8-9 4.500v12.500l7.800-5Z" fill="#18345c" />
          </svg>
        </Cell>
        <Cell>
          <svg width="28" height="28" viewBox="0 0 28 28">
            <defs><linearGradient id="m1" x1="0" y1="1" x2="1" y2="0"><stop offset="0" stopColor="#5a37b8" /><stop offset="1" stopColor="#c18be8" /></linearGradient><linearGradient id="m2" x1="0" y1="0" x2="1" y2="1"><stop offset="0" stopColor="#6fdcf8" /><stop offset="1" stopColor="#3c62d8" /></linearGradient></defs>
            <path d="M14.500 0 4 5a5 5 0 0 0-3 4.500V19l8 2V11c0-2 1-3 3-4Z" fill="url(#m1)" />
            <path d="M14 0 9 7.500 19 12v6l8.500 2V9.500A4 4 0 0 0 25 5.500L16 .3Z" fill="url(#m2)" />
            <path d="M1 18.500 12 27a4 4 0 0 0 4 .2l9-5a5 5 0 0 0 2.500-4v-2L18 20l-8-3Z" fill="#8a58cf" /><path d="m27.500 15-9 5L13 28c5 0 14.500-5 14.500-9Z" fill="#b28ae8" />
            <path d="m14 8.800 4.800 2.600v5.400L14 19.400l-4.800-2.600v-5.400Z" fill="#dbe1f3" />
          </svg>
        </Cell>
        <Cell tile="bg-[#edf1fb]" bar="w-5 bg-[#0b78d4]">
          <Chrome size={30} />
          <span className="absolute left-[25px] top-[3px] flex h-[21px] w-[21px] items-center justify-center rounded-full bg-[#5a4138] pb-1 text-[14px] leading-none text-[#d9d2cf]">g</span>
        </Cell>
        <Cell tile="bg-[#fce4e6]" bar="w-2 bg-[#c42b1c]">
          <Discord size={30} />
          <span className="absolute left-[27px] top-[4px] flex h-[18px] w-[18px] items-center justify-center rounded-full bg-[#f05457] text-[13px] font-bold leading-none text-white">5</span>
        </Cell>
      </div>
      <div className="-mt-px ml-auto mr-[25px] flex shrink-0 items-center">
        <Chevron dir="u" size={17} color="#222" w={1.100} />
        <svg width="20" height="13" viewBox="0 0 20 13" className="ml-3"><path d="M5 13a4.600 4.600 0 0 1-1-9.100A6 6 0 0 1 14.500 3.800 4.700 4.700 0 0 1 15.500 13Z" fill="#0a63bd" /><path d="M5 13a4.600 4.600 0 0 1-2-8.800C5 3.500 7 4 9 5.500L19.500 11a4.500 4.500 0 0 1-4 2Z" fill="#1283dc" /><path d="M2 11.900 13 5.500c2-1.500 4.500-1 5.500 0A4.600 4.600 0 0 1 15.500 13H5c-1.500 0-2.500-.5-3-1.100Z" fill="#28a0ea" /></svg>
        <svg width="20" height="14" viewBox="0 0 20 14" className="ml-[10px]"><path d="M5 13.300a4.300 4.300 0 0 1-1-8.600A6 6 0 0 1 14.200 4 4.700 4.700 0 0 1 15 13.300Z" fill="#8f8f8f" stroke="#222" strokeWidth="1.200" /><path d="M3 12.300 12 7c2-1.500 5-1.500 6.500.5.700 2.500-.8 5.200-3.300 5.200H5Z" fill="#dcdcdc" /></svg>
        <svg width="20" height="21" viewBox="0 0 20 21" fill="none" stroke="#222" strokeWidth="1.200" className="ml-[10px]"><path d="M1 9.500C2 2 13 0 18 5.800M18.500 1v5h-5.500M1.500 20v-5.200H7M2 15c2 3 5 5 8.500 4.700" /><circle cx="15" cy="15.500" r="5" fill="#fe0000" stroke="none" /></svg>
        <Fit w={29} className="ml-[18px]">ENG</Fit>
        <svg width="21" height="15" viewBox="0 0 21 15" fill="none" stroke="#222" strokeWidth="1.300" className="ml-[22px]"><path d="M.7 5.500c5.500-6 14-6 19.600 0M3.600 8.300c4-4.200 9.800-4.200 13.800 0M6.500 11.200c2.300-2.500 5.700-2.500 8 0" /><circle cx="10.500" cy="13" r="1.600" fill="#222" stroke="none" /></svg>
        <svg width="20" height="16" viewBox="0 0 20 16" fill="none" stroke="#222" strokeWidth="1.200" className="ml-[9px]"><path d="M.7 5.500H4L8.500 1.200v13.600L4 10.500H.7ZM11 5.500c1.300 1.500 1.300 3.500 0 5M13.700 3.200c2.600 3 2.600 6.600 0 9.600M16.400 1c3.800 4.400 3.800 9.600 0 14" /></svg>
        <svg width="20" height="13" viewBox="0 0 20 13" className="ml-[10px]"><rect x=".7" y=".7" width="16" height="11.600" rx="2.200" fill="none" stroke="#222" strokeWidth="1.400" /><path d="M3 3h9.500v7H3Z" fill="#111" /><path d="M17.500 4.500H19a1 1 0 0 1 1 1v2a1 1 0 0 1-1 1h-1.500Z" fill="#222" /></svg>
        <div className="-mt-px ml-[20px] flex w-[66px] flex-col items-end leading-5">
          <Fit w={58}>10:10 PM</Fit>
          <Fit w={66}>3/17/2024</Fit>
        </div>
        <svg width="17" height="19" viewBox="0 0 17 19" fill="none" stroke="#222" strokeWidth="1.300" className="ml-[13px]"><path d="M6.500 1a8.600 8.600 0 1 1-6 13.500C6 13.500 8.500 7.500 6.500 1Z" /></svg>
      </div>
    </div>
  );
}

export default function App() {
  return (
    <div className="relative flex h-[1080px] w-[1920px] flex-col overflow-hidden font-['Open_Sans','Noto_Sans',sans-serif]">
      <BrowserChrome />
      <Page />
      <Taskbar />
      <OpenDialog />
    </div>
  );
}
